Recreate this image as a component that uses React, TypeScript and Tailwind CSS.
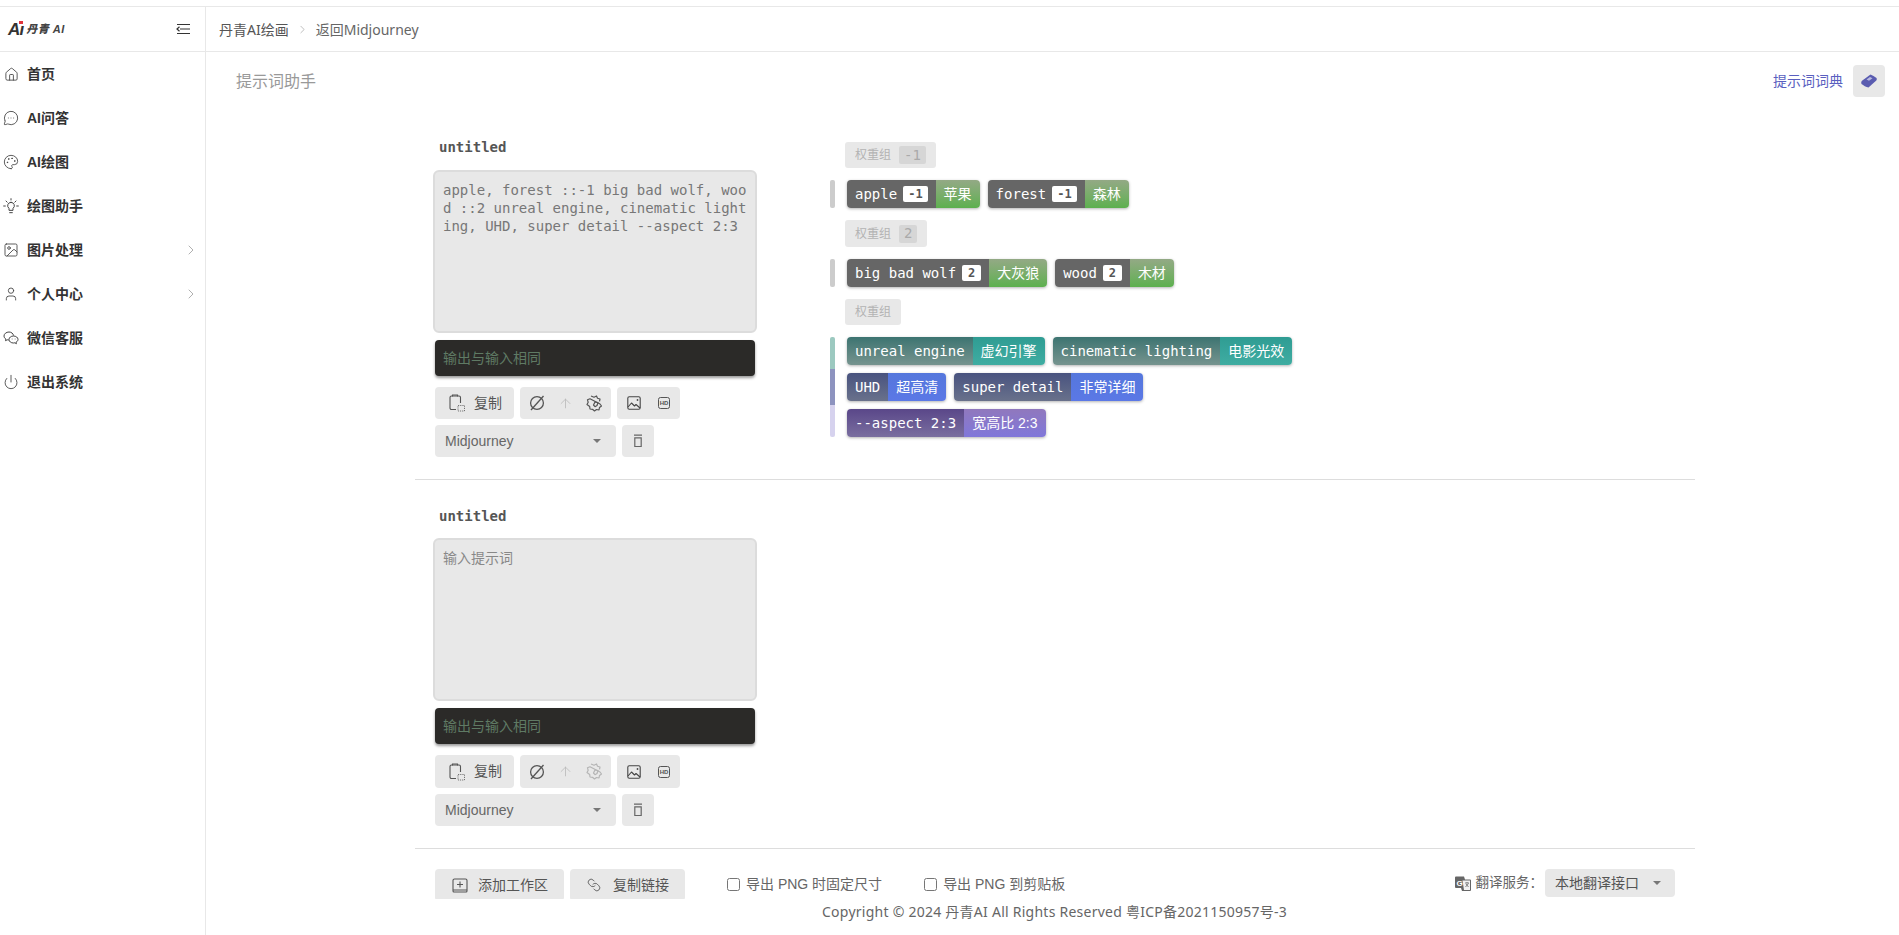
import { ChevronRight, House, Image, Link, MessageCircleMore, Palette, Power, User, ArrowUp } from "lucide-react";
import type { ReactNode } from "react";

const sans = "font-['Liberation_Sans','Noto_Sans_CJK_SC',sans-serif]";
const wide = "font-['Noto_Sans','Noto_Sans_CJK_SC',sans-serif]";
const mono = "font-['DejaVu_Sans_Mono','Noto_Sans_CJK_SC',monospace]";

function BulbIcon() {
  return (
    <svg width="16" height="16" viewBox="0 0 24 24" fill="none" stroke="currentColor" strokeWidth="1.500" strokeLinecap="round">
      <path d="M12 6.500a5 5 0 0 0-3 9v3h6v-3a5 5 0 0 0-3-9zM10 22h4M12 1v2M1 12h2.500M20.500 12H23M4.500 4.500l1.800 1.800M19.500 4.500l-1.800 1.800" />
    </svg>
  );
}

function WechatIcon() {
  return (
    <svg width="16" height="14" viewBox="0 0 16 14" fill="none" stroke="currentColor" strokeWidth="1">
      <path d="M10.500 4.500C10.200 2.500 8.300 1 6 1 3.300 1 1 2.800 1 5c0 1.300.8 2.400 1.900 3.100L2.500 9.700l1.700-.9c.5.100 1 .2 1.600.2" />
      <path d="M10.500 5C8 5 6 6.500 6 8.500S8 12 10.500 12c.5 0 1-.1 1.400-.2l1.500.9-.3-1.500c1.100-.7 1.900-1.600 1.900-2.700C15 6.500 13 5 10.500 5z" />
      <path d="M8.800 8h.6M11.800 8h.6" />
    </svg>
  );
}

const menu: { label: string; icon: ReactNode; arrow?: boolean }[] = [
  { label: "首页", icon: <House size={15} strokeWidth={1.4} /> },
  { label: "AI问答", icon: <MessageCircleMore size={16} strokeWidth={1.3} /> },
  { label: "AI绘图", icon: <Palette size={16} strokeWidth={1.3} /> },
  { label: "绘图助手", icon: <BulbIcon /> },
  { label: "图片处理", icon: <Image size={16} strokeWidth={1.3} />, arrow: true },
  { label: "个人中心", icon: <User size={16} strokeWidth={1.3} />, arrow: true },
  { label: "微信客服", icon: <WechatIcon /> },
  { label: "退出系统", icon: <Power size={16} strokeWidth={1.3} /> },
];

type ChipTone = "gray" | "teal" | "blue" | "purple";

const tones: Record<ChipTone, { left: string; right: string }> = {
  gray: { left: "bg-[#666666]", right: "bg-gradient-to-b from-[#93a985] to-[#5cb04e]" },
  teal: { left: "bg-gradient-to-b from-[#3c7471] to-[#76948f]", right: "bg-gradient-to-b from-[#2f9c93] to-[#3fada2]" },
  blue: { left: "bg-gradient-to-b from-[#49537f] to-[#69718b]", right: "bg-gradient-to-b from-[#5577dc] to-[#5b78e6]" },
  purple: { left: "bg-gradient-to-b from-[#5a4789] to-[#7a6e9f]", right: "bg-gradient-to-b from-[#9078bd] to-[#8077da]" },
};

function Chip({ text, weight, zh, tone }: { text: string; weight?: string; zh: string; tone: ChipTone }) {
  return (
    <div className="flex h-7 overflow-hidden rounded-[4px] shadow-[0_1px_3px_rgba(0,0,0,0.3)]">
      <div className={`flex items-center whitespace-pre px-2 text-[14px] text-white ${mono} ${tones[tone].left}`}>
        {text}
        {weight && (
          <span className="ml-1.5 flex h-4 min-w-[19px] items-center justify-center rounded-[2px] bg-white px-[5px] text-[12px] font-bold text-[#555555]">
            {weight}
          </span>
        )}
      </div>
      <div className={`flex items-center px-2 text-[14px] text-white ${sans} ${tones[tone].right}`}>{zh}</div>
    </div>
  );
}

function WeightTag({ value, tall }: { value?: string; tall?: boolean }) {
  return (
    <div className={`ml-[15px] flex w-fit items-center rounded-[3px] bg-[#e8e8e8] px-2.5 text-[12px] text-[#b3b3b3] ${tall ? "h-[27px]" : "h-[26px]"}`}>
      权重组
      {value && <span className={`ml-2 flex h-[18px] items-center rounded-[2px] bg-[#d6d6d6] px-[5px] text-[14px] text-[#aaaaaa] ${mono}`}>{value}</span>}
    </div>
  );
}

function Bar({ color }: { color: string }) {
  return <div className={`w-[5px] shrink-0 ${color}`} />;
}

function GrayBtn({ className, children }: { className: string; children: ReactNode }) {
  return <div className={`flex items-center rounded-[4px] bg-[#e8e8e8] text-[14px] text-[#555555] ${className}`}>{children}</div>;
}

function Caret() {
  return <span className="h-0 w-0 border-x-[4px] border-t-[4px] border-x-transparent border-t-[#777777]" />;
}

function ClipIcon() {
  return (
    <svg width="16" height="18" viewBox="0 0 16 18" fill="none" stroke="#555555" strokeWidth="1.100">
      <path d="M7 15.500H2.500A1.500 1.500 0 0 1 1 14V3.500A1.500 1.500 0 0 1 2.500 2H10a1.500 1.500 0 0 1 1.500 1.500V9" />
      <path d="M3.500 2.500V1h5v1.500" />
      <path d="M9 11.500h6.500v5.500H9z" strokeDasharray="1.200 1" strokeWidth="0.800" />
    </svg>
  );
}

function SlashCircle() {
  return (
    <svg width="16" height="16" viewBox="0 0 16 16" fill="none" stroke="#555555" strokeWidth="1.300">
      <circle cx="8" cy="8" r="6.400" />
      <path d="M2 15L14.500 1" />
    </svg>
  );
}

function BadgeIcon({ faded }: { faded?: boolean }) {
  return (
    <svg width="16" height="17" viewBox="0 0 16 17" fill="none" stroke={faded ? "#b5b5b5" : "#555555"} strokeWidth="1.200" strokeLinejoin="round">
      <path d="M5 1l3 1.200L10.500 1l1 2.200 2.500.8-.5 2.300" />
      <path d="M14 9l1.500 2-2 1.500-.5 2.500-2.500-.5-2 1.500-2-1.700-2.500-.3-.3-2.500L1 9.500l1.200-2.200L1.500 4.800l2.500-1z" />
      <path d="M7.500 10l1.500-3 3 .5-1 3-2 1.200z" />
    </svg>
  );
}

function PictureIcon() {
  return (
    <svg width="14" height="14" viewBox="0 0 14 14" fill="none" stroke="#444444" strokeWidth="1.100" strokeLinejoin="round">
      <rect x="0.800" y="0.800" width="12.400" height="12.400" rx="1.500" />
      <path d="M1 11l3.500-4 3 3 1.500-1.500 4 3.500" />
      <path d="M9.500 4h2M10.500 3v2" strokeWidth="0.800" />
    </svg>
  );
}

function HdIcon() {
  return (
    <svg width="12" height="12" viewBox="0 0 12 12" fill="none">
      <rect x="0.500" y="0.500" width="11" height="11" rx="2" stroke="#555555" />
      <text x="6" y="8.200" textAnchor="middle" fontSize="6" fontWeight="700" fill="#555555" fontFamily="Liberation Sans">HD</text>
    </svg>
  );
}

function TrashIcon() {
  return (
    <svg width="10" height="14" viewBox="0 0 10 14" fill="none" stroke="#666666" strokeWidth="1.200">
      <path d="M1 1.200h8M1.800 3.800h6.400V12.500H1.800z" />
    </svg>
  );
}

function Section({ text, second, children }: { text: string; second?: boolean; children?: ReactNode }) {
  return (
    <section className="flex h-[369px] border-b border-[#dddddd] pl-[18px]">
      <div className="w-[324px] shrink-0">
        <div className={`ml-1.5 pt-[27px] text-[14px] font-bold leading-[18px] text-[#555555] ${mono}`}>untitled</div>
        <textarea
          readOnly
          value={text}
          placeholder="输入提示词"
          className={`block h-[163px] w-full resize-none break-all rounded-[6px] border-2 border-[#dcdcdc] bg-[#e8e8e8] px-2 text-[14px] leading-[18px] text-[#777777] outline-none placeholder:font-['Noto_Sans_CJK_SC'] placeholder:text-[#888888] ${mono} ${second ? "mt-[13px] pt-2" : "mt-[14px] pt-[9px]"}`}
        />
        <div className="ml-0.5 mt-[7px] flex h-[36px] w-[320px] items-center rounded-[4px] bg-[#2b2a28] pl-2 text-[14px] text-[#5f7a64] shadow-[0_2px_3px_rgba(0,0,0,0.4)]">
          输出与输入相同
        </div>
        <div className={`ml-0.5 mt-[11px] flex gap-1.5 ${second ? "h-[33px]" : "h-8"}`}>
          <GrayBtn className="w-[79px] pl-3.5">
            <ClipIcon />
            <span className="ml-[9px]">复制</span>
          </GrayBtn>
          <GrayBtn className="w-[91px] justify-between px-[9px]">
            <SlashCircle />
            <ArrowUp size={15} strokeWidth={1.2} className="text-[#b5b5b5]" />
            <BadgeIcon faded={second} />
          </GrayBtn>
          <GrayBtn className="w-[63px] justify-between px-[10px]">
            <PictureIcon />
            <HdIcon />
          </GrayBtn>
        </div>
        <div className="ml-0.5 mt-1.5 flex h-8 gap-1.5">
          <GrayBtn className="w-[181px] justify-between pl-2.5 pr-[15px] text-[#666666]">
            Midjourney
            <Caret />
          </GrayBtn>
          <GrayBtn className="w-8 justify-center">
            <TrashIcon />
          </GrayBtn>
        </div>
      </div>
      {children}
    </section>
  );
}

function Prompts() {
  return (
    <div className="ml-[73px] pt-[31px] text-[12px]">
      <WeightTag value="-1" />
      <div className="mt-3 flex h-7 gap-3">
        <Bar color="rounded-[2px] bg-[#cccccc]" />
        <div className="flex gap-2">
          <Chip text="apple" weight="-1" zh="苹果" tone="gray" />
          <Chip text="forest" weight="-1" zh="森林" tone="gray" />
        </div>
      </div>
      <div className="mt-3">
        <WeightTag value="2" tall />
      </div>
      <div className="mt-3 flex h-7 gap-3">
        <Bar color="rounded-[2px] bg-[#cccccc]" />
        <div className="flex gap-2">
          <Chip text="big bad wolf" weight="2" zh="大灰狼" tone="gray" />
          <Chip text="wood" weight="2" zh="木材" tone="gray" />
        </div>
      </div>
      <div className="mt-3">
        <WeightTag />
      </div>
      <div className="mt-3 flex gap-3">
        <div className="flex w-[5px] shrink-0 flex-col overflow-hidden rounded-[2px]">
          <div className="h-8 bg-[#9cc9c0]" />
          <div className="h-9 bg-[#8d93bf]" />
          <div className="h-8 bg-[#d6d2ee]" />
        </div>
        <div className="flex flex-col gap-2">
          <div className="flex gap-2">
            <Chip text="unreal engine" zh="虚幻引擎" tone="teal" />
            <Chip text="cinematic lighting" zh="电影光效" tone="teal" />
          </div>
          <div className="flex gap-2">
            <Chip text="UHD" zh="超高清" tone="blue" />
            <Chip text="super detail" zh="非常详细" tone="blue" />
          </div>
          <div className="flex gap-2">
            <Chip text="--aspect 2:3" zh="宽高比 2:3" tone="purple" />
          </div>
        </div>
      </div>
    </div>
  );
}

export default function App() {
  return (
    <div className={`flex h-[935px] flex-col overflow-hidden bg-white text-[#333333] ${sans}`}>
      <div className="h-[7px] shrink-0 border-b border-[#e8e8e8]" />
      <div className="flex min-h-0 flex-1">
        <aside className="w-[206px] shrink-0 border-r border-[#e8e8e8]">
          <div className="flex h-[45px] items-center justify-between border-b border-[#e8e8e8] pl-2 pr-[15px]">
            <div className="flex items-center gap-[3px] italic">
              <span className="relative text-[17px] font-black leading-none tracking-tighter text-[#333333]">
                Aı
                <span className="absolute right-0 top-0 h-[3px] w-1 bg-[#e0353d]" />
              </span>
              <span className="text-[11px] font-black leading-none tracking-[0.5px] text-[#444444]">丹青 AI</span>
            </div>
            <svg width="14" height="12" viewBox="0 0 14 12" fill="none" stroke="#333333" strokeWidth="1.200">
              <path d="M1 1.500h13M4 6h10M1 10.500h13M3.500 3.800L1 6l2.500 2.200" />
            </svg>
          </div>
          <nav>
            {menu.map((item) => (
              <div key={item.label} className="flex h-11 items-center pl-[3px] pr-[6px] text-[14px] font-semibold text-[#333333]">
                <span className="flex w-4 justify-center text-[#444444]">{item.icon}</span>
                <span className="ml-2">{item.label}</span>
                {item.arrow && <ChevronRight size={16} strokeWidth={1} className="ml-auto text-[#888888]" />}
              </div>
            ))}
          </nav>
        </aside>
        <main className="flex min-w-0 flex-1 flex-col">
          <div className={`flex h-[45px] shrink-0 items-center border-b border-[#e8e8e8] pl-[13px] text-[14px] text-[#555555] ${wide}`}>
            丹青AI绘画
            <ChevronRight size={13} strokeWidth={1} className="mx-[7px] text-[#888888]" />
            <span className="text-[#666666]">返回Midjourney</span>
          </div>
          <div className="flex h-[59px] shrink-0 items-start justify-between pl-[30px] pr-[14px] pt-[13px]">
            <div className="pt-[6px] text-[16px] leading-[22px] text-[#999999]">提示词助手</div>
            <div className="flex items-center gap-2.5 text-[14px] text-[#5a5fc0]">
              提示词词典
              <div className="flex h-8 w-8 items-center justify-center rounded-[4px] bg-[#e8e8e8]">
                <svg width="16" height="14" viewBox="0 0 16 14">
                  <path d="M9.500 .500c2 1 4 2 6 3.500.5 1 .3 2-.5 2.800L7.500 13.500C5 13 2.500 11.500 .500 10c-.500-1.500-.300-2.500 .500-3.300z" fill="#5a5cb0" />
                  <path d="M5.500 5.500l3.500-2.500 2.500 1.200-3.500 2.500z" fill="#b9badf" />
                </svg>
              </div>
            </div>
          </div>
          <div className="min-h-0 flex-[0_0_auto] overflow-hidden pl-[209px]">
            <div className="h-[788px] w-[1280px] overflow-hidden">
              <Section text="apple, forest ::-1 big bad wolf, wood ::2 unreal engine, cinematic lighting, UHD, super detail --aspect 2:3">
                <Prompts />
              </Section>
              <Section text="" second />
              <div className="flex items-start justify-between pl-5 pr-[20px] pt-5 text-[14px] text-[#666666]">
                <div className="flex items-start">
                  <GrayBtn className="h-8 w-[129px] pl-[17px]">
                    <svg width="16" height="15" viewBox="0 0 16 15" fill="none" stroke="#555555" strokeWidth="1.100">
                      <path d="M2.500 1h11A1.500 1.500 0 0 1 15 2.500V12H1V2.500A1.500 1.500 0 0 1 2.500 1zM1 12v1a1 1 0 0 0 1 1h12a1 1 0 0 0 1-1v-1M8 3.500v6M5 6.500h6" />
                    </svg>
                    <span className="ml-[10px]">添加工作区</span>
                  </GrayBtn>
                  <GrayBtn className="ml-1.5 h-8 w-[115px] pl-[17px]">
                    <Link size={14} strokeWidth={1.3} className="-scale-x-100 text-[#444444]" />
                    <span className="ml-[12px]">复制链接</span>
                  </GrayBtn>
                  <label className="ml-[42px] flex h-[30px] items-center gap-1.5">
                    <input type="checkbox" className="m-0" />
                    导出 PNG 时固定尺寸
                  </label>
                  <label className="ml-[42px] flex h-[30px] items-center gap-1.5">
                    <input type="checkbox" className="m-0" />
                    导出 PNG 到剪贴板
                  </label>
                </div>
                <div className="flex items-center">
                  <svg width="16" height="15" viewBox="0 0 16 15">
                    <path d="M0 1.500A1 1 0 0 1 1 .500h8l1 3H15a1 1 0 0 1 1 1V14a1 1 0 0 1-1 1H7l-1-3H1a1 1 0 0 1-1-1z" fill="#666666" />
                    <path d="M7.500 4.500H15V14H9z" fill="#f2f2f2" />
                    <text x="4.500" y="9.500" textAnchor="middle" fontSize="8" fontWeight="700" fill="#ffffff" fontFamily="Liberation Sans">G</text>
                    <path d="M10 7h4M12 6v1M10.500 11l3-3.500M11 8l2.500 3" stroke="#666666" strokeWidth="0.800" fill="none" />
                  </svg>
                  <span className="ml-[5px] mr-[2px] text-[13.500px]">翻译服务：</span>
                  <GrayBtn className="h-7 w-[130px] justify-between pl-2.5 pr-3.5">
                    本地翻译接口
                    <Caret />
                  </GrayBtn>
                </div>
              </div>
            </div>
          </div>
          <div className={`ml-[616px] mt-[3px] text-[14px] leading-[20px] tracking-[0.25px] text-[#666666] ${wide}`}>
            Copyright © 2024 丹青AI All Rights Reserved 粤ICP备2021150957号-3
          </div>
        </main>
      </div>
    </div>
  );
}
